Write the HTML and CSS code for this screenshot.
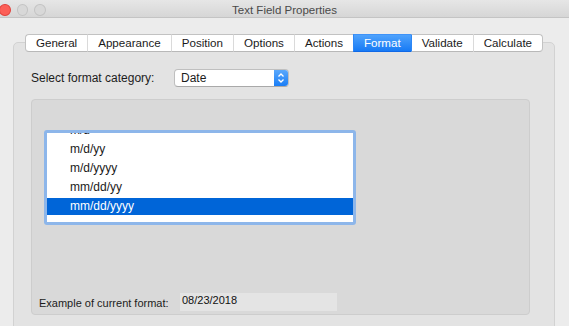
FILE: index.html
```html
<!DOCTYPE html>
<html>
<head>
<meta charset="utf-8">
<link rel="stylesheet" href="styles.css">
</head>
<body>
<div class="window">
  <div class="titlebar">
    <div class="lights">
      <span class="light red"></span>
      <span class="light gray"></span>
      <span class="light gray"></span>
    </div>
    <div class="title">Text Field Properties</div>
  </div>
  <div class="content">
    <div class="tabs">
      <div class="tab">General</div>
      <div class="tab">Appearance</div>
      <div class="tab">Position</div>
      <div class="tab">Options</div>
      <div class="tab">Actions</div>
      <div class="tab active">Format</div>
      <div class="tab">Validate</div>
      <div class="tab">Calculate</div>
    </div>
    <div class="tabbox">
      <div class="category-row">
        <span class="label">Select format category:</span>
        <div class="popup">
          <span class="popup-value">Date</span>
          <span class="popup-arrows">
            <svg width="8" height="12" viewBox="0 0 8 12"><path d="M1.5 4.5 L4 2 L6.5 4.5 M1.5 7.5 L4 10 L6.5 7.5" fill="none" stroke="#fff" stroke-width="1.3"/></svg>
          </span>
        </div>
      </div>
      <div class="panel">
        <div class="listbox">
          <div class="list-inner">
            <div class="rows">
              <div class="row">m/d</div>
              <div class="row">m/d/yy</div>
              <div class="row">m/d/yyyy</div>
              <div class="row">mm/dd/yy</div>
              <div class="row selected">mm/dd/yyyy</div>
            </div>
          </div>
        </div>
        <div class="example-row">
          <span class="example-label">Example of current format:</span>
          <span class="example-field">08/23/2018</span>
        </div>
      </div>
    </div>
  </div>
</div>
</body>
</html>
```

FILE: styles.css
```css
* { box-sizing: border-box; }
html, body {
  margin: 0;
  padding: 0;
  width: 569px;
  height: 326px;
  overflow: hidden;
  background: #ececec;
  font-family: "Liberation Sans", Arial, sans-serif;
  color: #1c1c1c;
}
.window {
  width: 569px;
  height: 326px;
  overflow: hidden;
}
.titlebar {
  height: 18px;
  background: linear-gradient(#e6e6e6, #d6d6d6);
  border-bottom: 1px solid #c4c4c4;
  display: flex;
  align-items: center;
}
.lights {
  display: flex;
  gap: 6px;
  margin-left: -1px;
  margin-top: 2px;
  width: 47px;
}
.light {
  width: 12px;
  height: 12px;
  border-radius: 50%;
  display: block;
}
.light.red {
  background: #fc5f57;
  border: 1px solid #e0443e;
}
.light.gray {
  background: #d8d8d8;
  border: 1px solid #c3c3c3;
}
.title {
  flex: 1;
  text-align: center;
  font-size: 11.5px;
  color: #4a4a4a;
  margin-left: -46px;
  margin-top: 2px;
}
.content {
  padding: 16px 0 0 13px;
}
.tabs {
  display: flex;
  width: 542px;
  justify-content: center;
  position: relative;
  z-index: 1;
  height: 18px;
}
.tab {
  height: 18px;
  line-height: 16px;
  font-size: 11.6px;
  padding: 0 10px;
  background: #fff;
  border-top: 1px solid #c2c2c2;
  border-bottom: 1px solid #b8b8b8;
  border-left: 1px solid #dadada;
  color: #1a1a1a;
}
.tab:first-child {
  border-left: 1px solid #c2c2c2;
  border-radius: 4px 0 0 4px;
}
.tab:last-child {
  border-right: 1px solid #c2c2c2;
  border-radius: 0 4px 4px 0;
}
.tab.active {
  background: linear-gradient(#4fa2fc, #177af5);
  color: #fff;
  border-top-color: #3f93f8;
  border-bottom-color: #1169e6;
  border-left-color: #2d87f6;
}
.tab.active + .tab { border-left-color: #2d87f6; }
.tabbox {
  margin-top: -10px;
  width: 542px;
  height: 300px;
  background: #e3e3e3;
  border: 1px solid #d2d2d2;
  border-radius: 5px;
  padding: 26px 24px 0 17px;
}
.category-row {
  display: flex;
  align-items: center;
  height: 18px;
}
.label {
  font-size: 12px;
  width: 143px;
}
.popup {
  width: 115px;
  height: 18px;
  display: flex;
  background: #fff;
  border: 1px solid #bfbfbf;
  border-bottom-color: #a9a9a9;
  border-radius: 4px;
  overflow: hidden;
}
.popup-value {
  flex: 1;
  font-size: 12px;
  line-height: 16px;
  padding-left: 6px;
}
.popup-arrows {
  width: 14px;
  background: linear-gradient(#5aa8fc, #1a7ef6);
  display: flex;
  align-items: center;
  justify-content: center;
}
.panel {
  margin-top: 12px;
  width: 499px;
  height: 216px;
  background: #d9d9d9;
  border: 1px solid #cdcdcd;
  border-radius: 4px;
  display: flex;
  flex-direction: column;
  padding: 30px 0 3px 7px;
}
.listbox {
  margin-left: 5px;
  width: 312px;
  height: 95px;
  border: 3px solid #8db6ea;
  border-radius: 3px;
  background: #fff;
}
.list-inner {
  height: 87px;
  overflow: hidden;
}
.rows {
  margin-top: -11px;
  display: flex;
  flex-direction: column;
  gap: 2px;
}
.row {
  height: 17px;
  line-height: 17px;
  font-size: 12px;
  padding-left: 23px;
  color: #1a1a1a;
}
.row.selected {
  background: #0065d8;
  color: #fff;
}
.example-row {
  margin-top: auto;
  display: flex;
  align-items: flex-start;
}
.example-label {
  font-size: 11px;
  width: 141px;
  padding-top: 4px;
}
.example-field {
  width: 157px;
  height: 18px;
  background: #e4e4e4;
  font-size: 11px;
  padding: 1px 0 0 2px;
  color: #111;
}
```
